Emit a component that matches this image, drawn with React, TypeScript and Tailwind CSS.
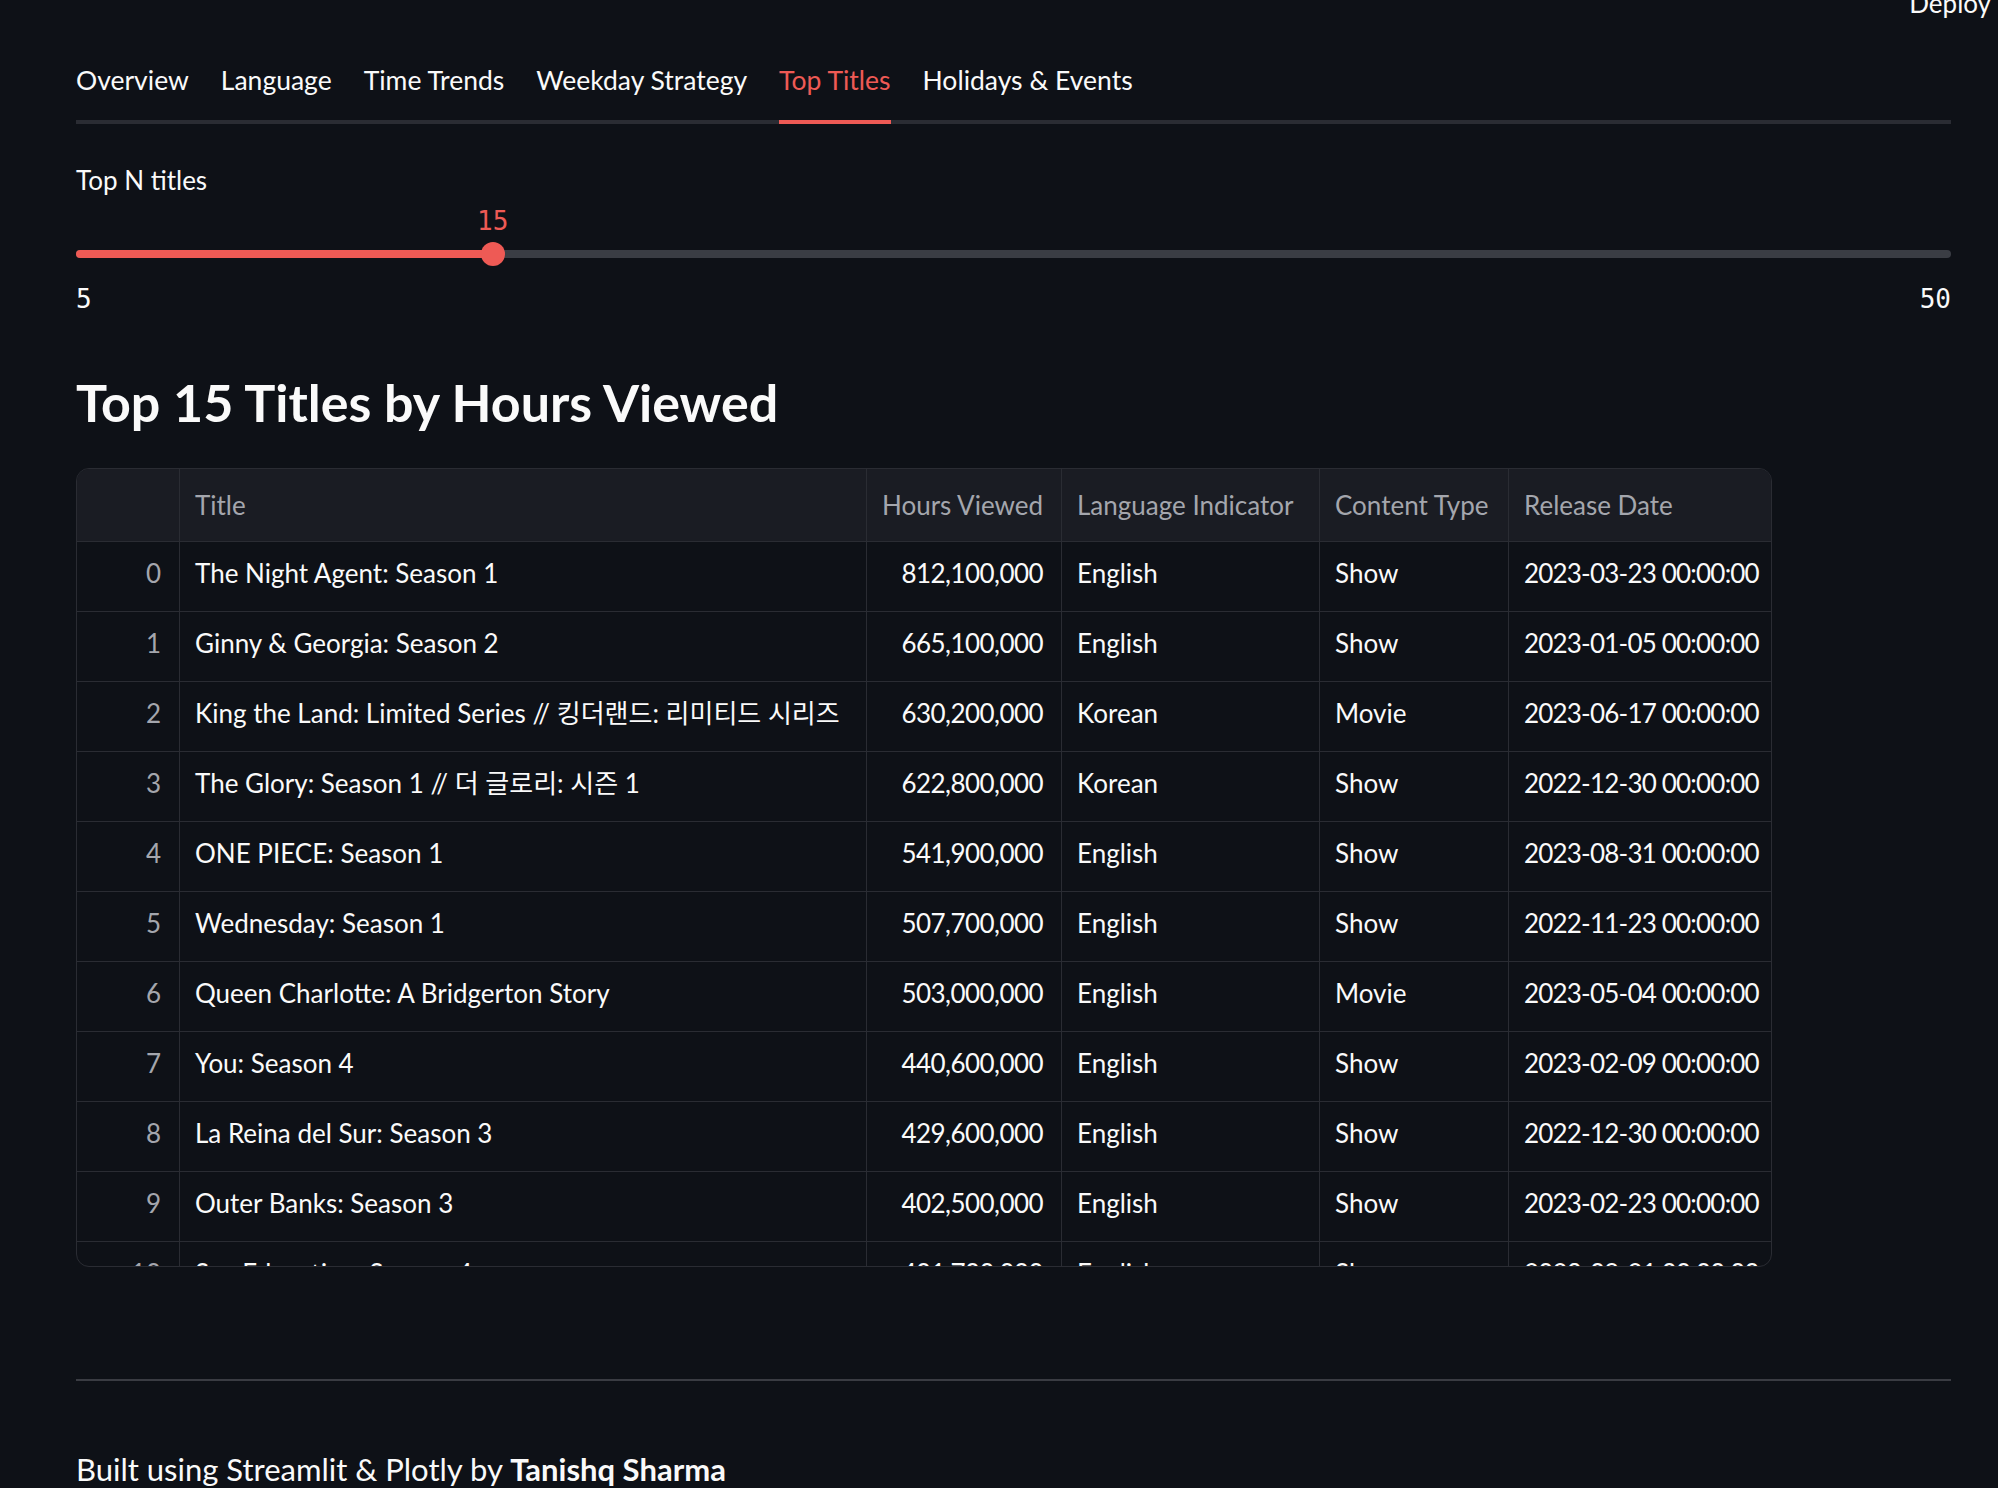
const TABS = ['Overview', 'Language', 'Time Trends', 'Weekday Strategy', 'Top Titles', 'Holidays & Events'];
const ACTIVE_TAB = 'Top Titles';

const SLIDER = { min: 5, max: 50, value: 15 };

type Row = [string, string, string, string, string];

const ROWS: Row[] = [
  ['The Night Agent: Season 1', '812,100,000', 'English', 'Show', '2023-03-23 00:00:00'],
  ['Ginny & Georgia: Season 2', '665,100,000', 'English', 'Show', '2023-01-05 00:00:00'],
  ['King the Land: Limited Series // 킹더랜드: 리미티드 시리즈', '630,200,000', 'Korean', 'Movie', '2023-06-17 00:00:00'],
  ['The Glory: Season 1 // 더 글로리: 시즌 1', '622,800,000', 'Korean', 'Show', '2022-12-30 00:00:00'],
  ['ONE PIECE: Season 1', '541,900,000', 'English', 'Show', '2023-08-31 00:00:00'],
  ['Wednesday: Season 1', '507,700,000', 'English', 'Show', '2022-11-23 00:00:00'],
  ['Queen Charlotte: A Bridgerton Story', '503,000,000', 'English', 'Movie', '2023-05-04 00:00:00'],
  ['You: Season 4', '440,600,000', 'English', 'Show', '2023-02-09 00:00:00'],
  ['La Reina del Sur: Season 3', '429,600,000', 'English', 'Show', '2022-12-30 00:00:00'],
  ['Outer Banks: Season 3', '402,500,000', 'English', 'Show', '2023-02-23 00:00:00'],
  ['Sex Education: Season 4', '401,700,000', 'English', 'Show', '2023-09-21 00:00:00'],
  ['The Witcher: Season 3', '392,100,000', 'English', 'Show', '2023-06-29 00:00:00'],
  ['Extraction 2', '381,300,000', 'English', 'Movie', '2023-06-16 00:00:00'],
  ['Lupin: Season 3', '376,000,000', 'English', 'Show', '2023-10-05 00:00:00'],
  ['Never Have I Ever: Season 4', '351,400,000', 'English', 'Show', '2023-06-08 00:00:00'],
];

const HEADERS = ['Title', 'Hours Viewed', 'Language Indicator', 'Content Type', 'Release Date'];

const GRID = 'grid grid-cols-[103px_687px_195px_258px_189px_262px]';
const SANS = "font-['Lato','Noto_Sans_CJK_KR',sans-serif]";
const MONO = "font-['DejaVu_Sans_Mono',monospace]";

// Lato's figures run wider than the original face, so numeric cells are tightened a little
const CELL_TRACKING = ['', 'tracking-[-0.55px]', '', '', 'tracking-[-0.8px]'];

function Slider() {
  const pct = ((SLIDER.value - SLIDER.min) / (SLIDER.max - SLIDER.min)) * 100;
  return (
    <div className="w-full">
      <div className="mt-[38px] text-[26px] leading-[36px] text-[#fafafa]">Top N titles</div>
      <div className="relative pt-[52px]">
        <div
          className={`absolute top-[8px] -translate-x-1/2 ${MONO} text-[26px] leading-[30px] text-[#ee5a55]`}
          style={{ left: `${pct}%` }}
        >
          {SLIDER.value}
        </div>
        <div className="relative h-[8px] w-full rounded-full bg-[#3a3d44]">
          <div className="absolute left-0 top-0 h-full rounded-full bg-[#ee5a55]" style={{ width: `${pct}%` }} />
          <div
            className="absolute top-[-8px] h-[24px] w-[24px] -translate-x-1/2 rounded-full bg-[#ee5a55]"
            style={{ left: `${pct}%` }}
          />
        </div>
      </div>
      <div className={`mt-[26px] flex justify-between ${MONO} text-[26px] leading-[30px] text-[#fafafa]`}>
        <span>{SLIDER.min}</span>
        <span>{SLIDER.max}</span>
      </div>
    </div>
  );
}

function DataTable() {
  return (
    <div className="mt-[34px] h-[799px] w-[1696px] overflow-hidden rounded-[13px] border border-[#2a2c33]">
      <div className={`${GRID} h-[73px] border-b border-[#2a2c33] bg-[#1a1c23] text-[26px] text-[#a4a6ad]`}>
        <div className="border-r border-[#2a2c33]" />
        {HEADERS.map((h, i) => (
          <div
            key={h}
            className={`flex items-center pl-[15px] ${i < HEADERS.length - 1 ? 'border-r border-[#2a2c33]' : ''}`}
          >
            {h}
          </div>
        ))}
      </div>
      {ROWS.map((row, idx) => (
        <div key={idx} className={`${GRID} h-[70px] border-b border-[#2a2c33] text-[26px] text-[#fafafa]`}>
          <div className="flex items-center justify-end border-r border-[#2a2c33] pb-[6px] pr-[18px] text-[#a4a6ad]">
            {idx}
          </div>
          {row.map((cell, i) => (
            <div
              key={i}
              className={`flex items-center overflow-hidden whitespace-nowrap pb-[6px] ${CELL_TRACKING[i]} ${
                i === 1 ? 'justify-end pr-[18px]' : 'pl-[15px]'
              } ${i < row.length - 1 ? 'border-r border-[#2a2c33]' : ''}`}
            >
              {cell}
            </div>
          ))}
        </div>
      ))}
    </div>
  );
}

export default function App() {
  return (
    <div className={`relative min-h-screen bg-[#0e1117] pl-[76px] pr-[47px] pt-[60px] pb-[6px] ${SANS} text-[#fafafa]`}>
      <div className="absolute right-[7px] top-[-13px] text-[26px] leading-[32px]">Deploy</div>

      <div className="flex gap-[32px] border-b-4 border-[#2a2c33]">
        {TABS.map((t) => (
          <div
            key={t}
            className={`-mb-[4px] border-b-4 pb-[20px] text-[26.5px] leading-[40px] ${
              t === ACTIVE_TAB ? 'border-[#ee5a55] text-[#ee5a55]' : 'border-transparent text-[#fafafa]'
            }`}
          >
            {t}
          </div>
        ))}
      </div>

      <Slider />

      <h3 className="mt-[56px] text-[52px] font-bold leading-[64px]">Top 15 Titles by Hours Viewed</h3>

      <DataTable />

      <div className="mt-[112px] h-[2px] w-full bg-[#3a3c43]" />

      <p className="mt-[68px] text-[31px] leading-[40px]">
        Built using Streamlit &amp; Plotly by <span className="font-bold">Tanishq Sharma</span>
      </p>
    </div>
  );
}
